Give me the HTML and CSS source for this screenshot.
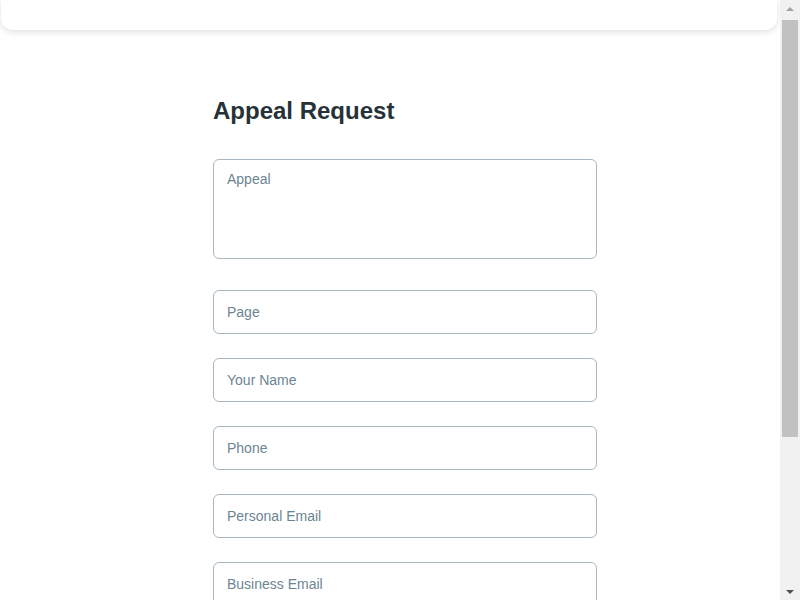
FILE: index.html
```html
<!DOCTYPE html>
<html lang="en">
<head>
<meta charset="utf-8">
<title>Appeal Request</title>
<link rel="stylesheet" href="styles.css">
</head>
<body>
<header class="topbar"></header>
<main class="page">
  <h1 class="title">Appeal Request</h1>
  <form class="form">
    <textarea class="field field-area" placeholder="Appeal"></textarea>
    <input class="field" type="text" placeholder="Page">
    <input class="field" type="text" placeholder="Your Name">
    <input class="field" type="text" placeholder="Phone">
    <input class="field" type="email" placeholder="Personal Email">
    <input class="field" type="email" placeholder="Business Email">
    <button class="submit" type="button">Submit</button>
  </form>
</main>
<div class="scrollbar" aria-hidden="true">
  <div class="sb-arrow"><span class="tri tri-up"></span></div>
  <div class="sb-track"><div class="sb-thumb"></div></div>
  <div class="sb-arrow"><span class="tri tri-down"></span></div>
</div>
</body>
</html>
```

FILE: styles.css
```css
html, body {
  margin: 0;
  padding: 0;
  background: #ffffff;
}

body {
  font-family: "Liberation Sans", Arial, sans-serif;
  color: #263238;
}

.topbar {
  height: 30px;
  margin: 0 23px 0 1px;
  background: #ffffff;
  border-radius: 0 0 12px 12px;
  box-shadow: 0 2px 6px rgba(0, 0, 0, 0.13);
}

.page {
  padding: 67px 0 140px 213px;
}

.title {
  margin: 0 0 34px 0;
  font-size: 24px;
  line-height: 28px;
  font-weight: 700;
  color: #263238;
}

.form {
  display: flex;
  flex-direction: column;
  gap: 24px;
  width: 384px;
}

.field {
  box-sizing: border-box;
  width: 384px;
  height: 44px;
  margin: 0;
  padding: 0 13px;
  border: 1px solid #a9b8c0;
  border-radius: 6px;
  background: #ffffff;
  font-family: "Liberation Sans", Arial, sans-serif;
  font-size: 14px;
  color: #263238;
  outline: none;
}

.field::placeholder {
  color: #6c8593;
  opacity: 1;
}

.field-area {
  display: block;
  height: 100px;
  padding: 11px 13px;
  line-height: 16px;
  resize: none;
  margin-bottom: 7px;
}

.submit {
  box-sizing: border-box;
  width: 384px;
  height: 44px;
  border: none;
  border-radius: 6px;
  background: #2b6cb0;
  color: #ffffff;
  font-family: "Liberation Sans", Arial, sans-serif;
  font-size: 14px;
  font-weight: 700;
}

/* browser-style scrollbar overlay */
.scrollbar {
  position: fixed;
  top: 0;
  right: 0;
  bottom: 0;
  width: 20px;
  background: #f1f1f1;
  display: flex;
  flex-direction: column;
}

.sb-arrow {
  height: 17px;
  display: flex;
  align-items: center;
  justify-content: center;
}

.tri {
  width: 0;
  height: 0;
  border-left: 4px solid transparent;
  border-right: 4px solid transparent;
}

.tri-up {
  border-bottom: 4px solid #a3a3a3;
}

.tri-down {
  border-top: 4px solid #505050;
}

.sb-track {
  flex: 1;
  padding: 3px 2px 0 2px;
}

.sb-thumb {
  height: 417px;
  background: #c1c1c1;
}
```
